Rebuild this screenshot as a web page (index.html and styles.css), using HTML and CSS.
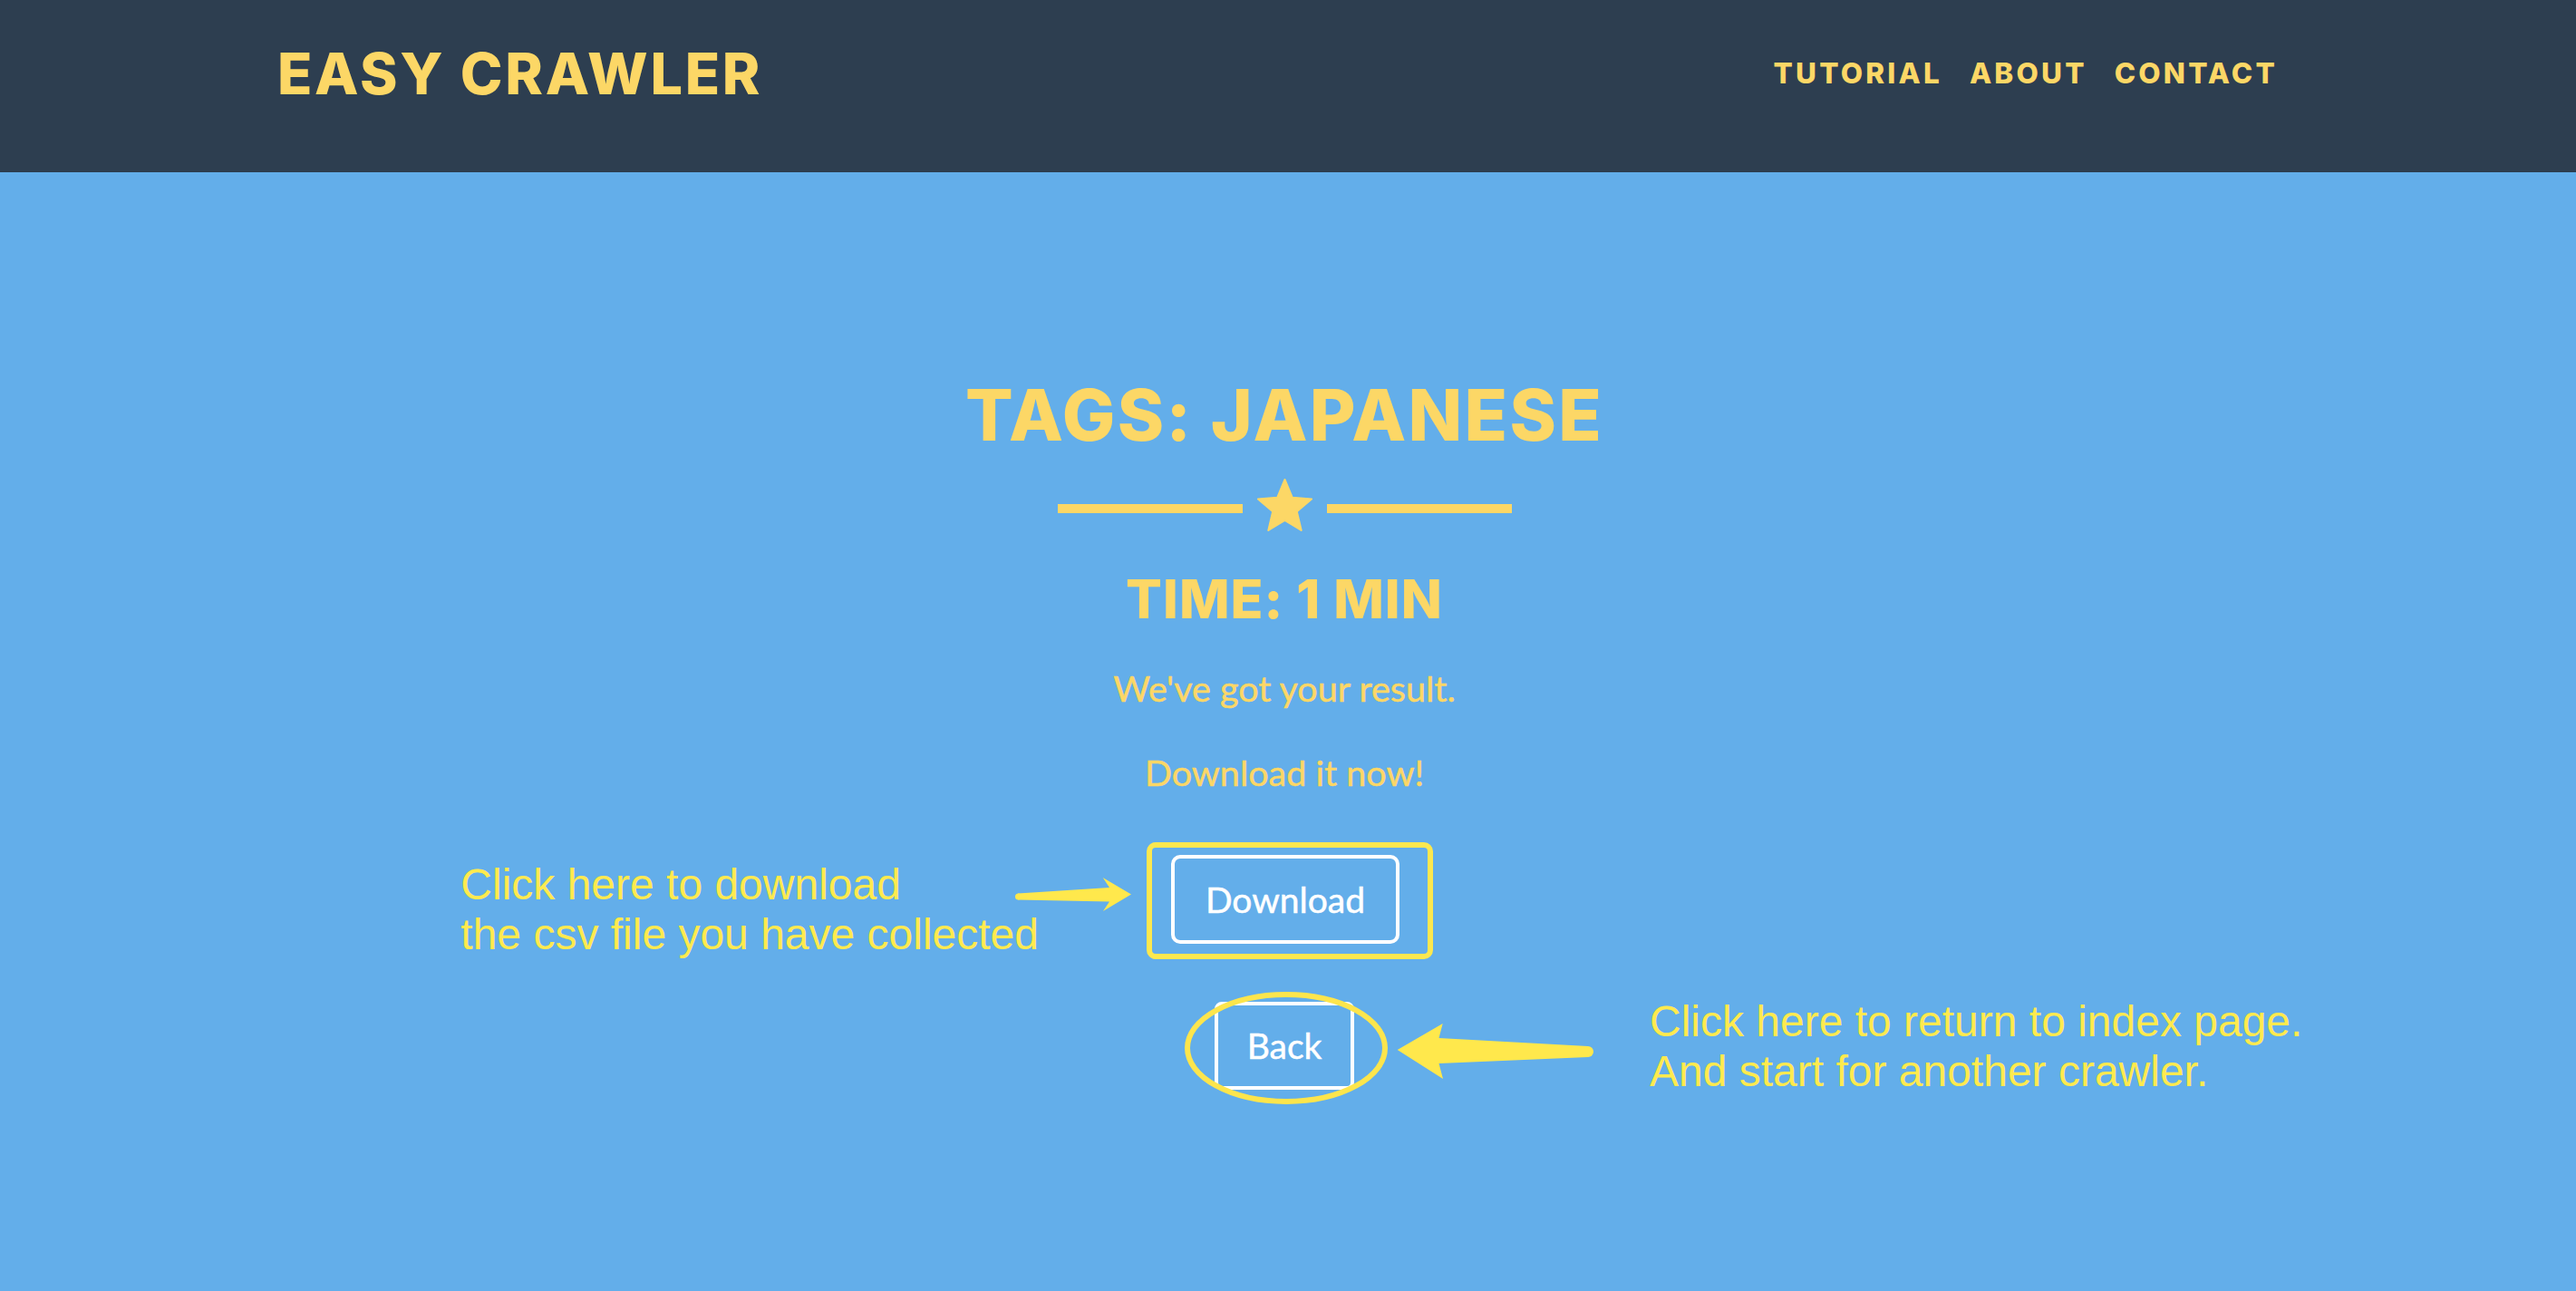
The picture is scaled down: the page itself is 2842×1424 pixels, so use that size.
FILE: index.html
```html
<!DOCTYPE html>
<html lang="en">
<head>
<meta charset="utf-8">
<title>Easy Crawler</title>
<link rel="stylesheet" href="styles.css">
</head>
<body>
<header class="topbar">
  <a class="brand" href="#">EASY CRAWLER</a>
  <nav class="nav">
    <a class="nav-link" href="#">TUTORIAL</a>
    <a class="nav-link" href="#">ABOUT</a>
    <a class="nav-link" href="#">CONTACT</a>
  </nav>
</header>
<main class="result">
  <h1 class="title">TAGS: JAPANESE</h1>
  <div class="divider">
    <span class="rule"></span>
    <svg class="star" width="61" height="58" viewBox="0 0 61 58" aria-hidden="true">
      <path d="M30.5,1 L38.7,20.7 L60,22.4 L43.8,36.3 L48.7,57 L30.5,46 L12.3,57 L17.2,36.3 L1,22.4 L22.3,20.7 Z"/>
    </svg>
    <span class="rule"></span>
  </div>
  <h2 class="time">TIME: 1 MIN</h2>
  <p class="msg msg-first">We've got your result.</p>
  <p class="msg msg-second">Download it now!</p>

  <div class="action-row row-download">
    <div class="note-left">
      <p class="note">Click here to download<br>the csv file you have collected</p>
      <svg class="arrow-right" width="130" height="40" viewBox="0 0 130 40" aria-hidden="true">
        <path d="M3,19.5 L104,13 L96.7,2 L128,20.5 L97,39 L104,28.5 L3,26.5 Z"/>
        <circle cx="3.5" cy="23" r="3.5"/>
      </svg>
    </div>
    <div class="highlight-box"><a class="btn btn-download" href="#">Download</a></div>
    <div class="spacer"></div>
  </div>

  <div class="action-row row-back">
    <div class="spacer"></div>
    <div class="back-wrap">
      <a class="btn btn-back" href="#">Back</a>
      <svg class="ring" width="230" height="130" viewBox="0 0 230 130" aria-hidden="true">
        <ellipse cx="115" cy="65" rx="109" ry="59"/>
      </svg>
    </div>
    <div class="note-right">
      <svg class="arrow-left" width="226" height="68" viewBox="0 0 226 68" aria-hidden="true">
        <path d="M3.7,32 L53.7,3 L49.5,19 L214,28 L214,40 L49.5,47 L54,64 Z"/>
        <circle cx="214" cy="34" r="6"/>
      </svg>
      <p class="note">Click here to return to index page.<br>And start for another crawler.</p>
    </div>
  </div>
</main>
</body>
</html>
```
FILE: styles.css
```css
html, body {
  margin: 0;
  padding: 0;
}
body {
  background: #63aeea;
  min-height: 100vh;
  font-family: "Lato", "Open Sans", sans-serif;
  color: #fcd766;
}

/* header */
.topbar {
  height: 190px;
  box-sizing: border-box;
  background: #2d3e50;
  display: flex;
  justify-content: space-between;
  align-items: center;
  padding: 0 329px 28px 306px;
}
.brand {
  font-family: "Inter", sans-serif;
  font-weight: 800;
  font-size: 63px;
  line-height: 63px;
  letter-spacing: 2.7px;
  color: #fcd766;
  text-decoration: none;
}
.nav {
  display: flex;
  gap: 30px;
}
.nav-link {
  font-family: "Inter", sans-serif;
  font-weight: 800;
  font-size: 31.5px;
  line-height: 31.5px;
  letter-spacing: 3.2px;
  color: #fcd766;
  text-decoration: none;
}

/* main */
.result {
  padding: 228.5px 8px 0 0;
  text-align: center;
}
.title {
  margin: 0;
  font-family: "Inter", sans-serif;
  font-weight: 800;
  font-size: 78px;
  line-height: 78px;
  letter-spacing: 2.3px;
}
.divider {
  margin-top: 31.5px;
  display: flex;
  justify-content: center;
  align-items: flex-start;
  gap: 16px;
}
.rule {
  width: 204px;
  height: 10px;
  margin-top: 28px;
  background: #fcd766;
}
.star {
  display: block;
  fill: #fcd766;
  stroke: #fcd766;
  stroke-width: 2;
  stroke-linejoin: round;
}
.time {
  margin: 45px 0 0;
  font-family: "Inter", sans-serif;
  font-weight: 800;
  font-size: 59px;
  line-height: 59px;
  letter-spacing: 1px;
}
.msg {
  margin: 0;
  font-size: 39.5px;
  line-height: 1.2;
  font-weight: 400;
  -webkit-text-stroke: 0.5px #fcd766;
}
.msg-first { margin-top: 45px; }
.msg-second { margin-top: 45.6px; }

/* action rows */
.action-row {
  display: grid;
  grid-template-columns: 1fr auto 1fr;
}
.row-download {
  margin-top: 53.6px;
  align-items: end;
}
.row-back {
  margin-top: 41px;
  align-items: start;
}
.note {
  margin: 0;
  font-family: "Liberation Sans", Arial, sans-serif;
  font-size: 48px;
  line-height: 55px;
  color: #ffea4e;
  text-align: left;
  white-space: nowrap;
}
.note-left {
  justify-self: end;
  display: flex;
  align-items: flex-start;
}
.arrow-right {
  display: block;
  fill: #ffe84c;
  margin: 18px 3px 0 -26px;
}
.highlight-box {
  margin-left: 12px;
  border: 6px solid #fce84f;
  border-radius: 10px;
  padding: 8px 31px 11px 21px;
}
.btn {
  display: flex;
  align-items: center;
  justify-content: center;
  box-sizing: border-box;
  border: 4px solid #ffffff;
  color: #ffffff;
  text-decoration: none;
  font-family: "Lato", sans-serif;
  font-size: 39px;
  line-height: 1.2;
  -webkit-text-stroke: 0.5px #ffffff;
}
.btn-download {
  width: 252px;
  height: 98px;
  border-radius: 10px;
}
.back-wrap {
  position: relative;
  margin-top: 6px;
}
.btn-back {
  width: 154px;
  height: 97px;
  border-radius: 8px;
}
.ring {
  position: absolute;
  left: -36px;
  top: -14px;
  fill: none;
  stroke: #fde54c;
  stroke-width: 6;
}
.note-right {
  justify-self: start;
  display: flex;
  align-items: flex-start;
}
.arrow-left {
  display: block;
  fill: #ffe84c;
  margin: 27px 56px 0 44px;
}
```
